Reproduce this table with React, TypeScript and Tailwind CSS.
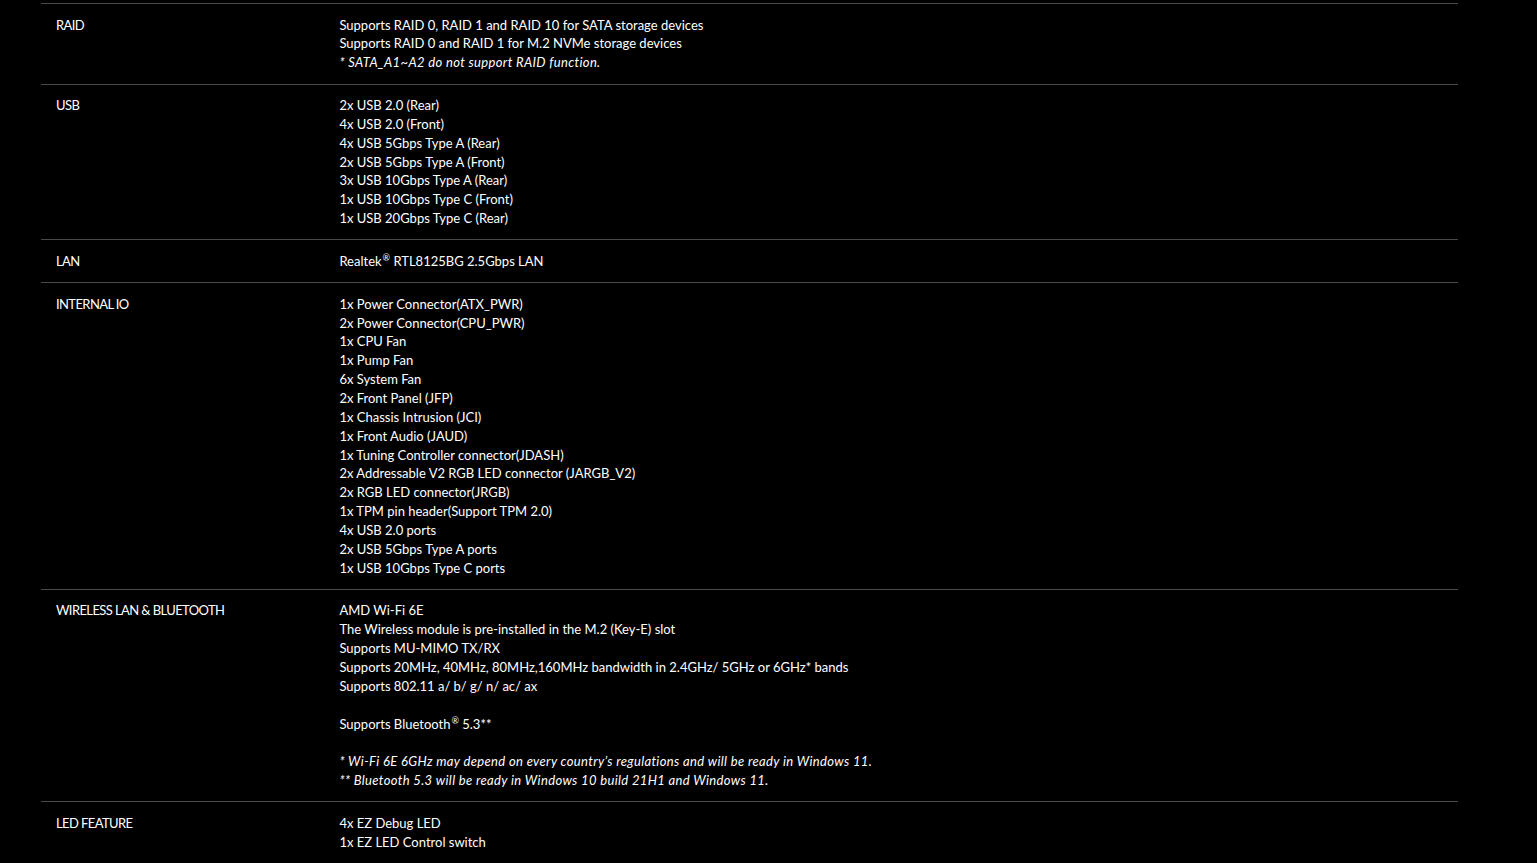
import React from "react";

type Line = { text: React.ReactNode; italic?: boolean } | null;

const Reg = () => <span className="relative -top-[5px] text-[9px] leading-none ml-[1px]">®</span>;

const specs: { label: string; lines: Line[] }[] = [
  {
    label: "RAID",
    lines: [
      { text: "Supports RAID 0, RAID 1 and RAID 10 for SATA storage devices" },
      { text: "Supports RAID 0 and RAID 1 for M.2 NVMe storage devices" },
      { text: "* SATA_A1~A2 do not support RAID function.", italic: true },
    ],
  },
  {
    label: "USB",
    lines: [
      { text: "2x USB 2.0 (Rear)" },
      { text: "4x USB 2.0 (Front)" },
      { text: "4x USB 5Gbps Type A (Rear)" },
      { text: "2x USB 5Gbps Type A (Front)" },
      { text: "3x USB 10Gbps Type A (Rear)" },
      { text: "1x USB 10Gbps Type C (Front)" },
      { text: "1x USB 20Gbps Type C (Rear)" },
    ],
  },
  {
    label: "LAN",
    lines: [{ text: <>Realtek<Reg /> RTL8125BG 2.5Gbps LAN</> }],
  },
  {
    label: "INTERNAL IO",
    lines: [
      { text: "1x Power Connector(ATX_PWR)" },
      { text: "2x Power Connector(CPU_PWR)" },
      { text: "1x CPU Fan" },
      { text: "1x Pump Fan" },
      { text: "6x System Fan" },
      { text: "2x Front Panel (JFP)" },
      { text: "1x Chassis Intrusion (JCI)" },
      { text: "1x Front Audio (JAUD)" },
      { text: "1x Tuning Controller connector(JDASH)" },
      { text: "2x Addressable V2 RGB LED connector (JARGB_V2)" },
      { text: "2x RGB LED connector(JRGB)" },
      { text: "1x TPM pin header(Support TPM 2.0)" },
      { text: "4x USB 2.0 ports" },
      { text: "2x USB 5Gbps Type A ports" },
      { text: "1x USB 10Gbps Type C ports" },
    ],
  },
  {
    label: "WIRELESS LAN & BLUETOOTH",
    lines: [
      { text: "AMD Wi-Fi 6E" },
      { text: "The Wireless module is pre-installed in the M.2 (Key-E) slot" },
      { text: "Supports MU-MIMO TX/RX" },
      { text: "Supports 20MHz, 40MHz, 80MHz,160MHz bandwidth in 2.4GHz/ 5GHz or 6GHz* bands" },
      { text: "Supports 802.11 a/ b/ g/ n/ ac/ ax" },
      null,
      { text: <>Supports Bluetooth<Reg /> 5.3**</> },
      null,
      { text: "* Wi-Fi 6E 6GHz may depend on every country’s regulations and will be ready in Windows 11.", italic: true },
      { text: "** Bluetooth 5.3 will be ready in Windows 10 build 21H1 and Windows 11.", italic: true },
    ],
  },
  {
    label: "LED FEATURE",
    lines: [{ text: "4x EZ Debug LED" }, { text: "1x EZ LED Control switch" }],
  },
];

export default function App() {
  return (
    <div
      className="min-h-screen bg-black text-white text-[13px] leading-[18.85px] pt-[3px]"
      style={{ fontFamily: "Lato, 'Noto Sans', sans-serif" }}
    >
      <div className="ml-[41px] w-[1417px]">
        {specs.map((s) => (
          <div key={s.label} className="grid grid-cols-[20%_1fr] border-t border-[#4a4a4a] py-[11.5px]">
            <div className="px-[15px] tracking-[-0.6px]">{s.label}</div>
            <div className="px-[15px]">
              {s.lines.map((l, i) =>
                l ? (
                  <div key={i} className={l.italic ? "italic tracking-[0.35px]" : ""}>
                    {l.text}
                  </div>
                ) : (
                  <div key={i} className="h-[18.85px]" />
                )
              )}
            </div>
          </div>
        ))}
      </div>
    </div>
  );
}
